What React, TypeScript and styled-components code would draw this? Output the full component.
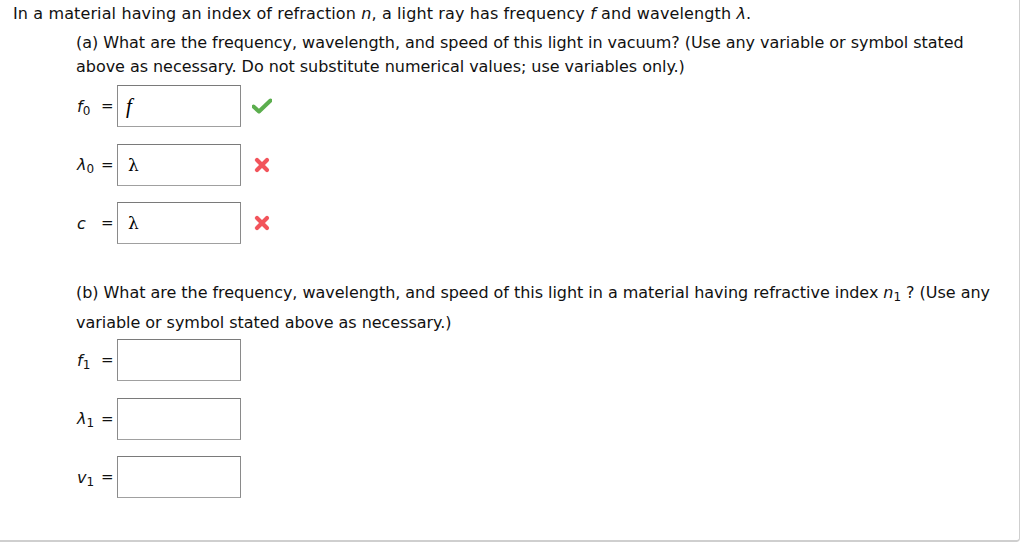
import React from 'react'
import styled, { createGlobalStyle } from 'styled-components'

const GlobalStyle = createGlobalStyle`
  html, body {
    margin: 0;
    padding: 0;
    background: #ffffff;
  }
  body {
    font-family: "DejaVu Sans", Verdana, sans-serif;
    color: #111;
  }
`

const Card = styled.div`
  width: 1020px;
  height: 542px;
  box-sizing: border-box;
  border-right: 1px solid #cfcfcf;
  border-bottom: 2px solid #cfcfcf;
  border-bottom-right-radius: 4px;
  padding: 4px 0 0 13px;
`

const Intro = styled.p`
  margin: 0;
  font-size: 16px;
  line-height: 20px;
  letter-spacing: 0.12px;
`

const Part = styled.section<{ $top: number }>`
  width: 930px;
  margin: ${p => p.$top}px 0 0 63px;
`

const Prompt = styled.p<{ $lh: number }>`
  margin: 0;
  font-size: 16px;
  line-height: ${p => p.$lh}px;
  letter-spacing: -0.04px;
`

const Var = styled.i`
  font-style: italic;
`

const Sub = styled.sub`
  font-size: 12px;
  font-style: normal;
  vertical-align: -3px;
  line-height: 0;
`

const Gap = styled.div<{ $h: number }>`
  height: ${p => p.$h}px;
`

const Rows = styled.div`
  display: flex;
  flex-direction: column;
  gap: 16.5px;
`

const Row = styled.div`
  display: flex;
  align-items: center;
  height: 42px;
`

const Label = styled.span`
  width: 22px;
  font-size: 16px;
  font-style: italic;
  padding-left: 1px;
  box-sizing: border-box;
  white-space: nowrap;
`

const Eq = styled.span`
  width: 19px;
  padding-left: 3px;
  box-sizing: border-box;
  font-size: 15px;
`

const Box = styled.div`
  width: 124px;
  height: 42px;
  box-sizing: border-box;
  border: 1px solid #8a8a8a;
  border-top-color: #7a7a7a;
  border-bottom-color: #a0a0a0;
  display: flex;
  align-items: center;
  padding-left: 8px;
  font-family: "Liberation Serif", "DejaVu Serif", serif;
  font-style: italic;
  font-size: 21px;
  color: #000;
`

const Lambda = styled.span`
  font-family: "DejaVu Serif", serif;
  font-style: normal;
  font-size: 17px;
  padding-left: 2px;
`

const Mark = styled.span`
  margin-left: 11px;
  width: 20px;
  height: 20px;
  display: flex;
  align-items: center;
  justify-content: center;
`

const Check = () => (
  <svg width="20" height="16" viewBox="0 0 20 16">
    <path d="M1.5 8.5 L7 13.5 L18.5 2.5" fill="none" stroke="#5cae4e" strokeWidth="4" strokeLinejoin="round" strokeLinecap="round" />
  </svg>
)

const Cross = () => (
  <svg width="16" height="16" viewBox="0 0 16 16">
    <path d="M3 3 L13 13 M13 3 L3 13" fill="none" stroke="#f2545b" strokeWidth="4.2" strokeLinecap="round" />
  </svg>
)

type Answer = {
  sym: React.ReactNode
  sub: string
  value?: React.ReactNode
  mark?: 'ok' | 'bad'
}

const partA: Answer[] = [
  { sym: 'f', sub: '0', value: 'f', mark: 'ok' },
  { sym: 'λ', sub: '0', value: <Lambda>λ</Lambda>, mark: 'bad' },
  { sym: 'c', sub: '', value: <Lambda>λ</Lambda>, mark: 'bad' },
]

const partB: Answer[] = [
  { sym: 'f', sub: '1' },
  { sym: 'λ', sub: '1' },
  { sym: 'v', sub: '1' },
]

const AnswerRows = ({ items }: { items: Answer[] }) => (
  <Rows>
    {items.map((a, i) => (
      <Row key={i}>
        <Label>
          {a.sym}
          {a.sub && <Sub>{a.sub}</Sub>}
        </Label>
        <Eq>=</Eq>
        <Box>{a.value}</Box>
        {a.mark && <Mark>{a.mark === 'ok' ? <Check /> : <Cross />}</Mark>}
      </Row>
    ))}
  </Rows>
)

const App = () => (
  <>
    <GlobalStyle />
    <Card>
      <Intro>
        In a material having an index of refraction <Var>n</Var>, a light ray has frequency <Var>f</Var> and wavelength <Var>λ</Var>.
      </Intro>
      <Part $top={7}>
        <Prompt $lh={24}>
          (a) What are the frequency, wavelength, and speed of this light in vacuum? (Use any variable or symbol stated
          above as necessary. Do not substitute numerical values; use variables only.)
        </Prompt>
        <Gap $h={6} />
        <AnswerRows items={partA} />
      </Part>
      <Part $top={34}>
        <Prompt $lh={30}>
          (b) What are the frequency, wavelength, and speed of this light in a material having refractive index <Var>n</Var><Sub>1</Sub> ? (Use any
          variable or symbol stated above as necessary.)
        </Prompt>
        <Gap $h={1} />
        <AnswerRows items={partB} />
      </Part>
    </Card>
  </>
)

export default App
